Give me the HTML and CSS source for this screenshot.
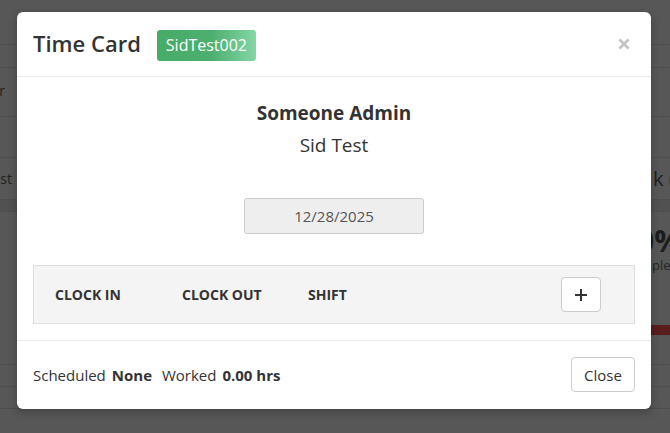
FILE: index.html
```html
<!DOCTYPE html>
<html lang="en">
<head>
<meta charset="utf-8">
<title>Time Card</title>
<link rel="stylesheet" href="styles.css">
</head>
<body>
<div class="page">
  <div class="row row-top"><div class="edge-l"></div><div></div><div class="edge-r"></div></div>
  <div class="row row-nav"><div class="edge-l"></div><div></div><div class="edge-r"></div></div>
  <div class="row row-filter"><div class="edge-l pad-r"><span class="bg-text">Filter</span></div><div></div><div class="edge-r"></div></div>
  <div class="row row-empty"><div class="edge-l"></div><div></div><div class="edge-r"></div></div>
  <div class="row row-tabs"><div class="edge-l pad-st"><span class="bg-text">Sid Test</span></div><div></div><div class="edge-r"><span class="bg-title">k (</span></div></div>
  <div class="row row-band"><div class="edge-l"></div><div></div><div class="edge-r"></div></div>
  <div class="row row-stats"><div class="edge-l"></div><div></div>
    <div class="edge-r stat">
      <span class="bg-big">0%</span>
      <span class="bg-small">plete</span>
      <span class="bg-bar"></span>
    </div>
  </div>
  <div class="row row-a"><div class="edge-l"></div><div></div><div class="edge-r"></div></div>
  <div class="row row-b"><div class="edge-l"></div><div></div><div class="edge-r"></div></div>
</div>

<div class="modal">
  <div class="modal-header">
    <h4 class="modal-title">Time Card</h4>
    <span class="badge">SidTest002</span>
    <button class="close" aria-label="Close">
      <svg width="12" height="12" viewBox="0 0 12 12"><path d="M1.5 1.5L10.5 10.5M10.5 1.5L1.5 10.5" stroke="#c3c3c3" stroke-width="2.6" fill="none"/></svg>
    </button>
  </div>
  <div class="modal-body">
    <div class="name">Someone Admin</div>
    <div class="sub">Sid Test</div>
    <div class="date">12/28/2025</div>
    <div class="punches">
      <span class="col">CLOCK IN</span>
      <span class="col">CLOCK OUT</span>
      <span class="col">SHIFT</span>
      <button class="add" aria-label="Add">
        <svg width="14" height="14" viewBox="0 0 14 14"><path d="M7 1V13M1 7H13" stroke="#333" stroke-width="2" fill="none"/></svg>
      </button>
    </div>
  </div>
  <div class="modal-footer">
    <div class="totals">
      <span class="lbl">Scheduled</span><strong>None</strong>
      <span class="lbl">Worked</span><strong>0.00 hrs</strong>
    </div>
    <button class="btn">Close</button>
  </div>
</div>
</body>
</html>
```

FILE: styles.css
```css
* { box-sizing: border-box; margin: 0; padding: 0; }
html, body { width: 670px; height: 433px; }
body {
  background: #575757;
  font-family: "Open Sans", "Liberation Sans", sans-serif;
  color: #333;
  overflow: hidden;
  position: relative;
}

/* dimmed page behind the dialog */
.page { display: flex; flex-direction: column; }
.row {
  display: grid;
  grid-template-columns: 17px 1fr 19px;
  border-bottom: 1px solid #4e4e4e;
}
.row-top { height: 45px; }
.row-nav { height: 23px; }
.row-filter { height: 49px; }
.row-empty { height: 41px; }
.row-tabs { height: 42px; }
.row-band { height: 12px; background: #515151; }
.row-stats { height: 153px; }
.row-a { height: 22px; }
.row-b { height: 22px; }

.edge-l {
  display: flex;
  justify-content: flex-end;
  align-items: center;
  overflow: hidden;
  white-space: nowrap;
}
.pad-r { padding-right: 12px; padding-bottom: 4px; }
.pad-st { padding-right: 5px; }
.edge-r {
  overflow: hidden;
  white-space: nowrap;
  padding-left: 2px;
  display: flex;
  align-items: center;
}
.bg-text { font-size: 14px; color: #222; }
.bg-title { font-size: 20px; color: #1e1e1e; }
.stat {
  flex-direction: column;
  align-items: flex-start;
  justify-content: flex-start;
  padding-left: 0;
}
.bg-big { font-size: 30px; font-weight: 700; color: #1c1c1c; line-height: 26px; margin-top: 16px; margin-left: -14px; }
.bg-small { font-size: 13px; color: #262626; line-height: 16px; margin-top: 3px; margin-left: 1px; }
.bg-bar { display: block; width: 19px; height: 10px; background: #5a1d1d; margin-top: 52px; }

/* dialog */
.modal {
  position: absolute;
  left: 17px;
  top: 12px;
  width: 634px;
  background: #fff;
  border-radius: 6px;
  box-shadow: 0 3px 9px rgba(0, 0, 0, 0.25);
}
.modal-header {
  height: 65px;
  display: flex;
  align-items: center;
  padding: 0 16px;
  border-bottom: 1px solid #ececec;
}
.modal-title {
  font-size: 22px;
  font-weight: 600;
  color: #333;
  line-height: 30px;
  margin-top: -2px;
}
.badge {
  margin-left: 16px;
  margin-top: 2px;
  height: 31px;
  padding: 0 9px;
  display: flex;
  align-items: center;
  border-radius: 3px;
  color: #fff;
  font-size: 16px;
  background: linear-gradient(90deg, #47ac68 0%, #4caf6e 55%, #84d7a6 100%);
}
.close {
  margin-left: auto;
  margin-right: 5px;
  background: none;
  border: 0;
  display: flex;
  width: 12px;
  height: 12px;
}

.modal-body {
  padding: 23px 16px 16px;
  display: flex;
  flex-direction: column;
  align-items: center;
}
.name { font-size: 19px; font-weight: 700; line-height: 26px; color: #333; }
.sub { font-size: 19px; line-height: 26px; margin-top: 6px; color: #333; }
.date {
  margin-top: 40px;
  width: 180px;
  height: 36px;
  background: #eee;
  border: 1px solid #ccc;
  border-radius: 3px;
  display: flex;
  align-items: center;
  justify-content: center;
  font-size: 15px;
  color: #555;
}
.punches {
  margin-top: 31px;
  align-self: stretch;
  height: 59px;
  background: #f4f4f4;
  border: 1px solid #ddd;
  display: flex;
  align-items: center;
  padding: 0 33px 0 21px;
}
.col {
  width: 127px;
  font-size: 14px;
  font-weight: 700;
  color: #333;
}
.col:nth-child(2) { width: 126px; }
.add {
  margin-left: auto;
  width: 40px;
  height: 35px;
  background: #fff;
  border: 1px solid #ccc;
  border-radius: 4px;
  display: flex;
  align-items: center;
  justify-content: center;
}

.modal-footer {
  border-top: 1px solid #ececec;
  padding: 16px 16px 17px;
  display: flex;
  align-items: center;
}
.totals { font-size: 15px; color: #333; }
.totals .lbl { margin-right: 6px; }
.totals strong { font-weight: 700; margin-right: 6px; }
.btn {
  margin-left: auto;
  width: 64px;
  height: 35px;
  background: #fff;
  border: 1px solid #ccc;
  border-radius: 4px;
  font-family: "Open Sans", "Liberation Sans", sans-serif;
  font-size: 15px;
  color: #333;
}
```
